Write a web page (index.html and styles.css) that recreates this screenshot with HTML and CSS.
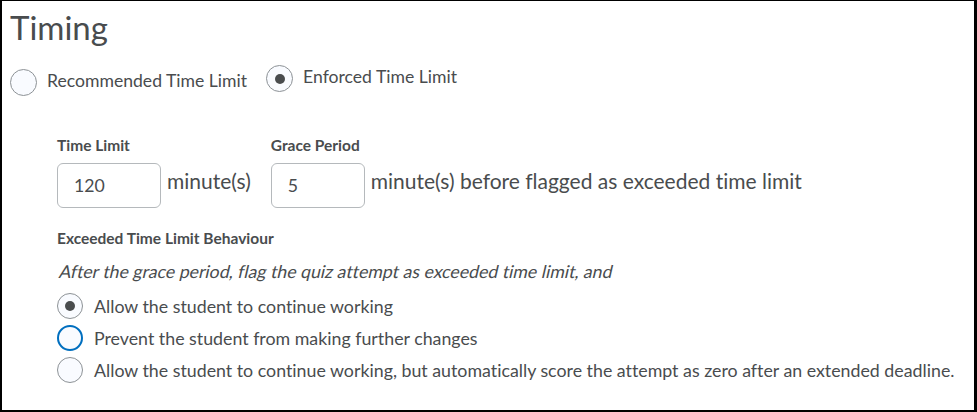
FILE: index.html
```html
<!DOCTYPE html>
<html>
<head>
<meta charset="utf-8">
<link rel="stylesheet" href="styles.css">
</head>
<body>
<div class="frame">
  <h2 class="title">Timing</h2>
  <div class="type-row">
    <label class="radio-item first">
      <span class="radio"></span>
      <span class="radio-text">Recommended Time Limit</span>
    </label>
    <label class="radio-item second">
      <span class="radio checked"></span>
      <span class="radio-text">Enforced Time Limit</span>
    </label>
  </div>
  <div class="settings">
    <div class="fields">
      <div class="field">
        <div class="field-label">Time Limit</div>
        <div class="field-row">
          <div class="input wide">120</div>
          <span class="unit">minute(s)</span>
        </div>
      </div>
      <div class="field">
        <div class="field-label">Grace Period</div>
        <div class="field-row">
          <div class="input narrow">5</div>
          <span class="unit">minute(s) before flagged as exceeded time limit</span>
        </div>
      </div>
    </div>
    <div class="field-label behaviour">Exceeded Time Limit Behaviour</div>
    <p class="hint"><span class="oblique">After the grace period, flag the quiz attempt as exceeded time limit, and</span></p>
    <div class="options">
      <label class="option">
        <span class="radio small checked"></span>
        <span class="option-text">Allow the student to continue working</span>
      </label>
      <label class="option">
        <span class="radio small focus"></span>
        <span class="option-text">Prevent the student from making further changes</span>
      </label>
      <label class="option">
        <span class="radio small"></span>
        <span class="option-text">Allow the student to continue working, but automatically score the attempt as zero after an extended deadline.</span>
      </label>
    </div>
  </div>
</div>
</body>
</html>
```
FILE: styles.css
```css
html, body {
  margin: 0;
  padding: 0;
  background: #ffffff;
}
body {
  font-family: Lato, "Noto Sans", sans-serif;
  color: #494c4e;
  font-variant-ligatures: none;
}
.frame {
  width: 977px;
  height: 412px;
  box-sizing: border-box;
  border-style: solid;
  border-color: #000;
  border-width: 1px 3px 2px 2px;
  padding: 6px 0 0 8px;
  overflow: hidden;
}
.title {
  margin: 0;
  font-size: 33px;
  font-weight: 400;
  line-height: 40px;
  color: #494c4e;
}
.type-row {
  display: flex;
  align-items: flex-start;
  margin-top: 17px;
  gap: 19px;
}
.radio-item {
  display: flex;
  align-items: flex-start;
  gap: 10px;
}
.radio-item.first {
  margin-top: 5px;
}
.radio-item.second {
  margin-top: 1px;
}
.radio {
  box-sizing: border-box;
  width: 27px;
  height: 27px;
  border-radius: 50%;
  border: 1px solid #8d9296;
  background: #f9fbff;
  flex: none;
  display: flex;
  align-items: center;
  justify-content: center;
}
.radio.checked::after {
  content: "";
  width: 10px;
  height: 10px;
  border-radius: 50%;
  background: #494c4e;
}
.radio-text {
  font-size: 17.6px;
  line-height: 24px;
}
.settings {
  padding-left: 47px;
  margin-top: 40px;
}
.fields {
  display: flex;
  gap: 20px;
}
.field-label {
  font-size: 15.5px;
  font-weight: 700;
  line-height: 18px;
  color: #494c4e;
}
.field-row {
  display: flex;
  align-items: flex-start;
  gap: 6px;
  margin-top: 9px;
}
.input {
  box-sizing: border-box;
  height: 45px;
  border: 1px solid #b5b9bc;
  border-radius: 6px;
  font-size: 17.7px;
  line-height: 43px;
  padding-left: 16px;
  background: #fff;
}
.input.wide { width: 104px; }
.input.narrow { width: 94px; }
.unit {
  font-size: 21px;
  line-height: 25px;
  margin-top: 5px;
}
.behaviour {
  margin-top: 21px;
}
.hint {
  margin: 14px 0 0 0;
  font-size: 17.7px;
  line-height: 22px;
}
.oblique {
  display: inline-block;
  font-style: normal;
  transform: skewX(-13deg);
  transform-origin: 0 100%;
}
.options {
  display: flex;
  flex-direction: column;
  gap: 6px;
  margin-top: 10px;
}
.option {
  display: flex;
  align-items: center;
  gap: 11px;
}
.radio.small {
  width: 26px;
  height: 26px;
}
.radio.focus {
  border: 2px solid #006fbf;
}
.option-text {
  font-size: 17.8px;
  line-height: 26px;
}
```
